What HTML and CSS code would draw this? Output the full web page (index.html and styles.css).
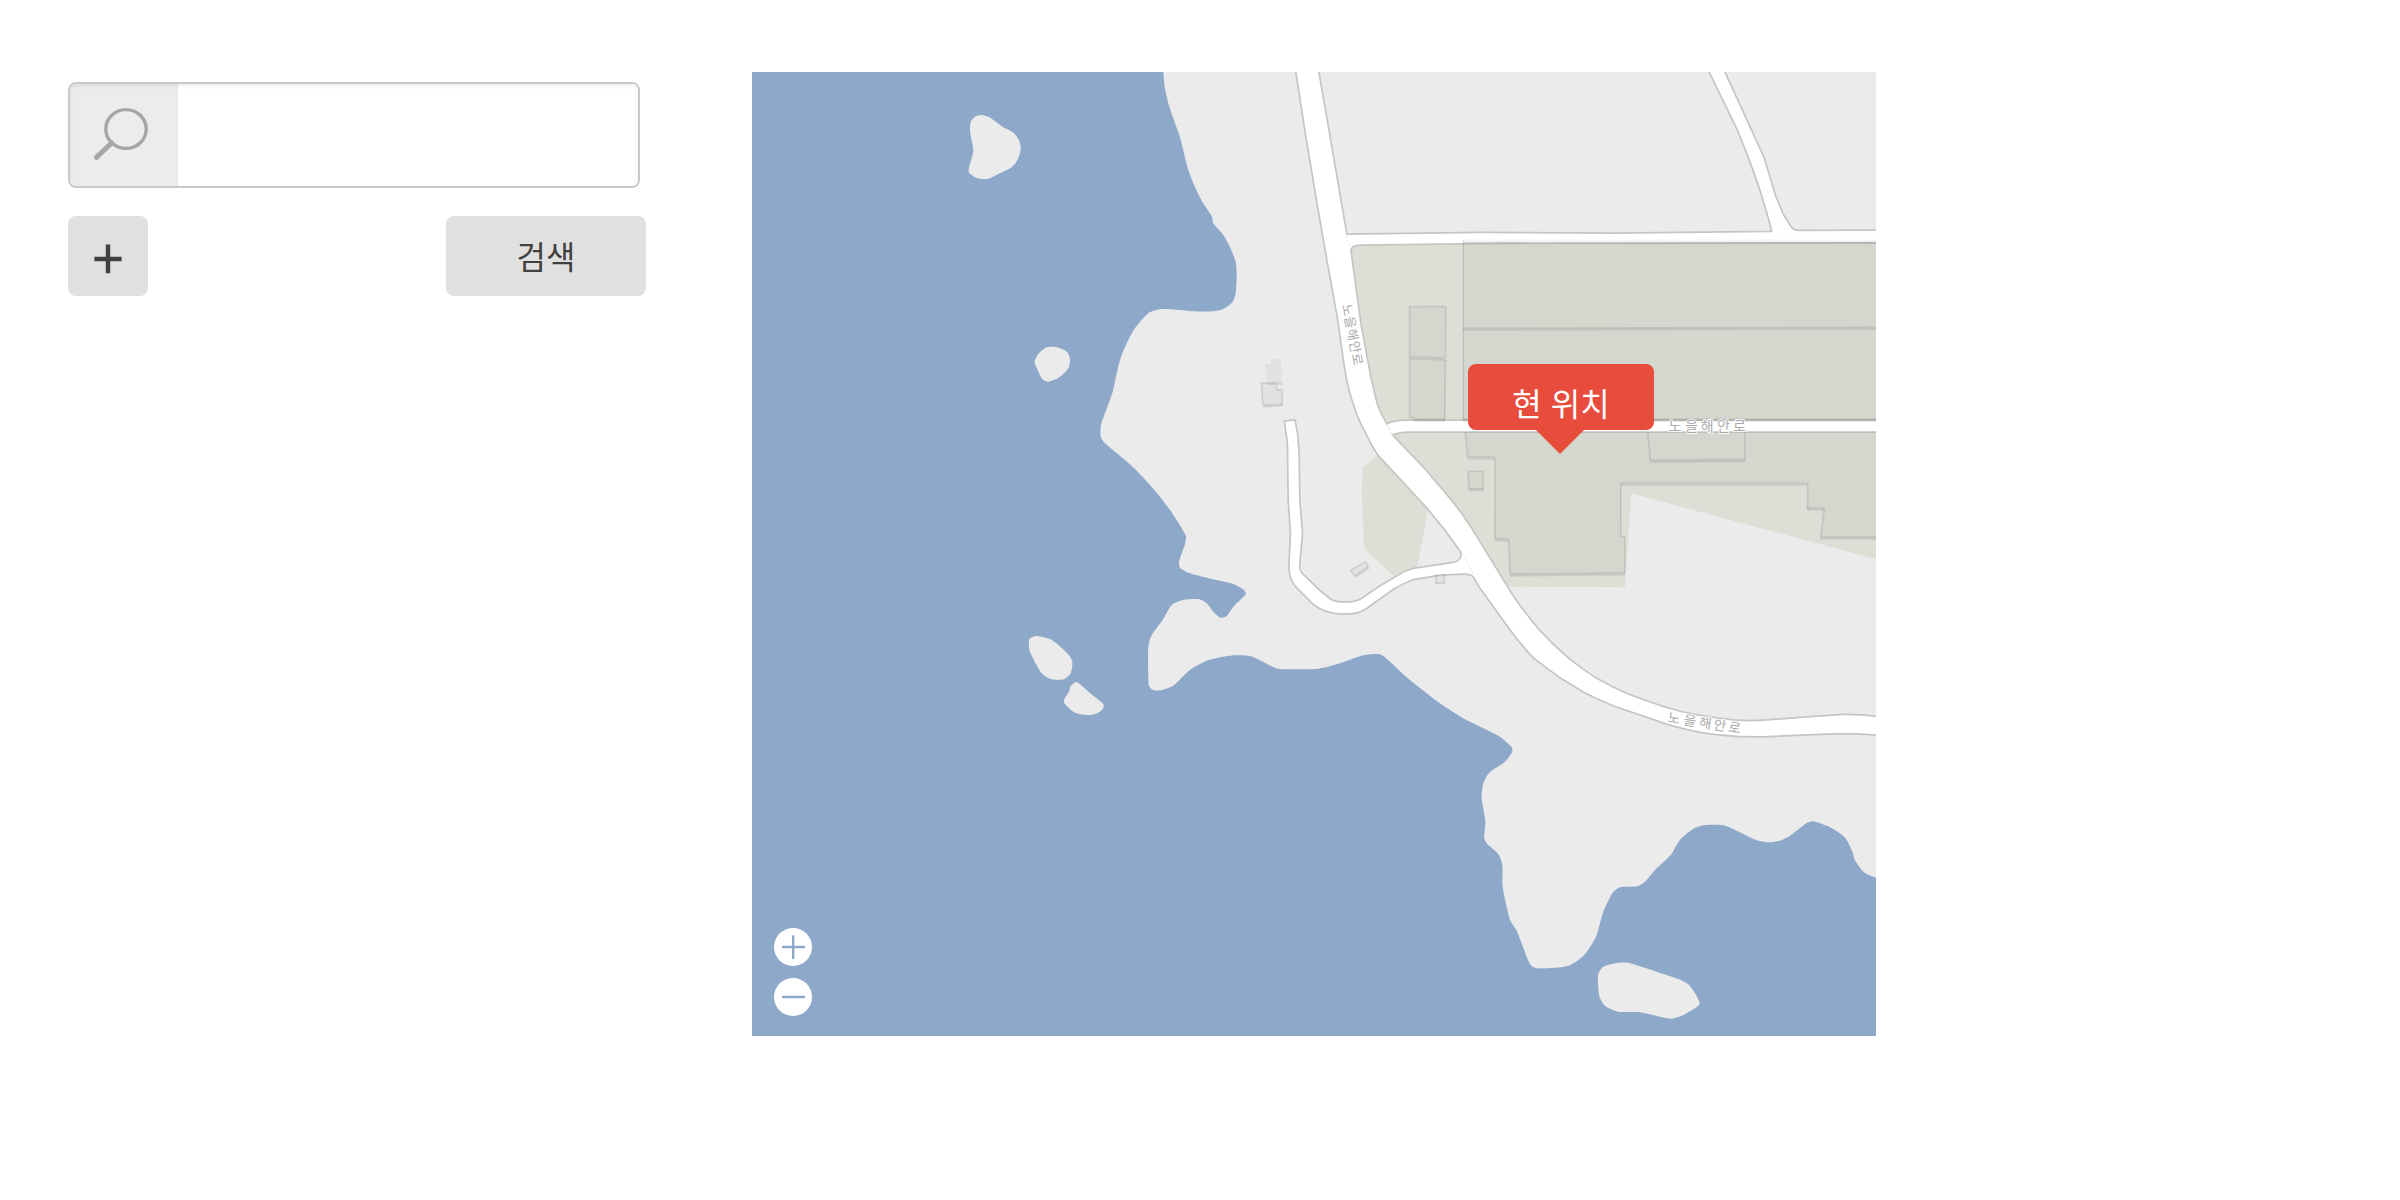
FILE: index.html
```html
<!DOCTYPE html>
<html lang="ko">
<head>
<meta charset="utf-8">
<title>위치 검색</title>
<link rel="stylesheet" href="styles.css">
</head>
<body>
<main class="page">
  <form class="search">
    <div class="search-box">
      <span class="search-icon">
        <svg width="44" height="48" viewBox="0 0 44 48"><ellipse cx="24" cy="21" rx="20.2" ry="19.4"/><path d="M-5.6 49.4 9.6 35" class="handle"/></svg>
      </span>
      <input class="search-input" type="text" aria-label="검색어">
    </div>
    <div class="actions">
      <button class="btn btn-add" type="button" aria-label="추가">
        <svg width="28" height="30" viewBox="0 0 28 30"><path d="M.4 15H27.6M14 .6V29.2"/></svg>
      </button>
      <button class="btn btn-search" type="button">검색</button>
    </div>
  </form>

  <section class="map">
    <svg class="map-canvas" width="1124" height="964" viewBox="752 72 1124 964">
      <defs>
        <path id="main-road" d="M1293 50 L1296.7 72 1306.7 136.7 1317.3 200 1328.3 263.3 1338.3 318.3 1345.7 370 Q1349 390 1355 406.7 Q1359 419 1364 428 Q1371 443 1378.3 454.3 L1427.3 507.3 Q1446 529 1461.7 551.7 L1473.3 575 1480 586.7 1511.7 630.7 Q1523 646 1534 657.3 Q1546 667 1560 676.7 L1585 692 Q1599 699 1613.3 705 L1670 724.3 Q1686 729 1703.3 732 Q1722 735 1740 735.7 L1763.3 736 1833.3 733 1856.7 733 1900 736 V719 L1876 717 Q1858 715 1843.3 715.3 L1806.7 717.7 1763.3 721 Q1748 722 1733.3 720.7 Q1716 719 1700 716.3 Q1681 713 1663.3 707.3 Q1644 701 1626.7 694.3 Q1610 687 1595 678.3 Q1581 669 1568.3 659 Q1552 645 1538.3 630 Q1524 613 1511.7 595 L1480 543.3 Q1471 528 1461.7 515 Q1453 503 1443.3 491.7 L1423.3 468.3 1398 442 Q1390 434 1386 424 Q1380 414 1376.7 405 Q1373 391 1370 376.7 L1360 323.3 1350 250 1346 234 1326.7 121.7 1318 72 1314 50 Z"/>
        <path id="north-road" d="M1330 235.3 1346 235 1480 233.3 1613 234 1772.7 232.3 Q1771 223 1767.3 211.7 Q1762 192 1755 173.3 Q1747 151 1738.3 130 L1710 72 1700 52 H1714 L1724 72 1763.3 157.7 1775 196.7 1783.3 216 1791 228 Q1793 231 1798 231.2 L1900 231 V242 L1480 242.7 1361.7 244.3 Q1351 244.5 1350.5 249 L1340 250 Z"/>
        <path id="middle-road" d="M1375 428 1386 425 Q1395 421 1405 421 H1900 V431.3 H1408 Q1399 431.3 1391.7 434 L1385 436 Z"/>
        <path id="lane" d="M1285.3 421.7 1288.3 443.3 1289 500 1291.3 533.3 1289.7 566.7 Q1290 579 1296.7 586.7 L1313.3 603.3 Q1323 612 1340 613 H1350 Q1359 613 1366.7 607.3 L1393.3 588.3 Q1402 583 1413.3 578.7 L1440 574.3 1463 573.3 Q1470 573 1474 576 L1480 570 1461.7 551.7 Q1463.5 561 1453.3 563.3 L1413.3 569.3 Q1406 571 1400 575 L1380 586.7 1361.7 599.3 Q1356 602.7 1348 602.7 H1340 Q1333 602 1330 599.7 L1320 591.7 1301.7 574 Q1298.5 570 1298.7 566.7 L1301.7 533.3 1299 500 1298.3 453.3 1296.7 433.3 1294.3 420.7 Z"/>
      </defs>

      <rect class="sea" x="752" y="72" width="1124" height="964"/>
      <g class="land">
        <polygon data-smooth points="1163.3,72 1165,88.3 1168.3,103.3 1173.3,118.3 1180,137.3 1188.3,170 1196.7,190.7 1203.3,203.3 1212,216.7 1213.3,223.3 1223.3,235 1230,247.3 1235.7,261.7 1236.7,273.3 1235.7,293.3 1232.7,301.7 1223.3,309 1213.3,311.3 1193.3,311.3 1176.7,309.7 1160,309.3 1148.3,313.3 1133.3,330.7 1121.7,355 1116.7,373.3 1112.7,391.7 1105,413.3 1101,425 1100.7,436.7 1105,443.3 1125,460 1136.7,470.7 1155,490.7 1170,510 1186,536 1185,544 1179,561.7 1180,567.7 1188.3,572.7 1206.7,577.7 1233.3,584 1244,590 1246,594 1234,606 1226.7,616 1220.7,617.7 1213.3,611.7 1206.7,603.3 1199.3,599.3 1183.3,600 1171.7,605 1162.7,620 1151.7,635 1148.3,646.7 1148.7,685 1152.7,690 1161.7,690 1173.3,685.7 1190,670 1206.7,660.7 1230,655.7 1250,656 1263.3,662 1277.3,668.7 1318.3,668.7 1340,663.3 1363.3,655.3 1380,654.3 1390,661.7 1406.7,677.3 1436.7,701 1463.3,718.3 1480,726.7 1500,736.7 1511.7,747.3 1512.3,751.7 1505,761.7 1489.3,772.7 1483.3,783.3 1481.7,798.3 1485.3,821 1484.3,838.3 1487.3,844 1498.3,854 1502.3,865 1502.7,886.7 1510,920 1516.7,930.7 1528.3,960.7 1531.7,966 1536.7,968.3 1550,968 1568.3,965.7 1583.3,956 1595.7,937.3 1603.3,911.7 1612.7,892.7 1620,887.3 1637.3,886.3 1645,881.7 1656.7,868.3 1670.7,855 1680,840 1693.3,828.7 1705,825 1723.3,825.3 1736.7,830.7 1756.7,840.3 1768.3,842.3 1780,840.7 1789.3,836.3 1806.7,823 1812.7,821.3 1830,827.3 1845,837.7 1852.7,852.3 1854.3,859 1864,872.3 1876,877.7 1960,900 1960,0 1160,0"/>
        <polygon data-smooth points="970.7,121.7 975,116.7 981.7,115 989.3,117.3 1003.3,127.3 1013.3,132.7 1019.3,140.7 1020.7,148.3 1018.3,158.3 1011.7,167.3 998.3,174 988.3,178.7 977.3,178.3 968.7,172.3 969.3,166.7 973.3,150.7 971.3,138.3 970,130.7"/>
        <polygon data-smooth points="1034.7,361.7 1038.3,354 1046.7,347.3 1056.7,347.3 1066.7,351.7 1070,359 1068.3,368.3 1059.3,377.3 1048.3,381.7 1042.3,379 1037.7,370"/>
        <polygon data-smooth points="1029.3,639.3 1036.7,636 1051.7,640 1068.3,654.3 1072.3,661.7 1070.7,673.3 1064,679.3 1051.7,679.3 1041.7,673.3 1030,651.7"/>
        <polygon data-smooth points="1076.7,682 1090,693 1103.3,704 1103.3,708.3 1098.3,712.7 1090,715 1075,712.7 1064.3,703.3 1064.3,699.3 1069.3,691 1070.7,686"/>
        <polygon data-smooth points="1598,975 1603.3,966.7 1618.3,962.7 1628.3,962.7 1678.3,979 1688.3,984.3 1695,993.3 1699.7,1003.3 1696.7,1007.3 1681.7,1015.7 1670,1018.7 1640,1012.3 1618.3,1011.7 1605,1005.7 1599.3,996"/>
      </g>

      <g class="green">
        <path d="M1342 241H1876V559.3L1631.3 493.3 1625 587.3 1508.3 586.7 1470 545 1385 440 1366 400 1350 320Z"/>
        <path d="M1380 453 1362.7 467.7 1361.7 490 1364 548.3 1393.3 575.7 1416.7 570 1428.3 508Z"/>
      </g>

      <g class="road-edge">
        <use href="#north-road"/><use href="#middle-road"/><use href="#lane"/><use href="#main-road"/>
      </g>
      <g class="road">
        <use href="#north-road"/><use href="#middle-road"/><use href="#lane"/><use href="#main-road"/>
      </g>
      <path class="junction" d="M1346.5 236 1350 247M1387 425 1391.5 433.5M1463 554 1474 575"/>

      <g class="building">
        <path d="M1409.3 306.7 1445.7 306.3 1445 358.7 1410 357.5Z"/>
        <path d="M1410 359 1445.7 360 1444.7 421 1413.7 420 1410 418Z"/>
        <path d="M1463 239.5H1880V420H1463Z"/>
        <path d="M1465 432 1467.7 457.5H1495L1494.7 539 1509 540 1510 575 1625 573.5V536.7L1620.7 536 1621 483H1807.7L1807.3 509H1824.3L1820.7 538H1880V432Z"/>
        <path d="M1467.7 471H1483.3V489.5H1469Z"/>
        <path d="M1271 359H1281L1282.7 384H1267.3L1265 364H1271Z"/>
        <path d="M1261 382.7H1276.7V390H1282.3L1282.7 405.5 1262.7 406.7Z"/>
        <path d="M1350 570 1365.7 561.7 1368.7 567.3 1355 578.3Z"/>
        <path d="M1435.7 574.3H1444.7V583.3H1435.7Z"/>
      </g>
      <g class="wall">
        <path d="M1409.6 418V306.7H1445.7V357M1410.3 418 1414 417.5M1445.4 360 1444.7 420"/>
        <path d="M1463.3 240V420M1463 242.6H1876"/>
        <path d="M1465.3 432 1467.7 457M1494.9 458V539M1508.7 540 1510 574M1624.8 573V536.7H1620.8V483M1807.5 483V509M1824.2 509 1820.7 537"/>
        <path d="M1647.8 432 1650.3 460.5M1744.8 432V460"/>
        <path d="M1469 489 1468 471.3H1483.3V489"/>
        <path d="M1262.7 405 1261.5 383H1276.6V390H1282.2V405M1267 384H1282"/>
        <path d="M1354 575 1350.5 570 1365.7 562 1368.5 567.3M1436 574.5V583H1444.4V574.5"/>
      </g>
      <g class="wall wall-thick">
        <path d="M1410 357.7 1445.7 359M1413.7 420H1445"/>
        <path d="M1463 329 1876 328.2M1463 420H1876"/>
        <path d="M1467.7 458H1495M1495 539.3 1509 540.5M1510 575 1625 573.7M1621 484.1H1807.5M1807.3 509H1824.3M1820.7 538H1876M1650.3 461 1745 460.2"/>
        <path d="M1469 489.5H1483.5M1262.7 406 1282.7 405M1355 576.5 1368.5 567.5"/>
      </g>

      <g class="label">
        <text transform="translate(1342 305) rotate(79)" font-size="13" letter-spacing=".6">노을해안로</text>
        <text x="1668.5 1685 1700.8 1717 1733" y="430.8" font-size="14">노을해안로</text>
        <text transform="translate(1667 722) rotate(9)" font-size="13.5" x="0 16.3 32 46.5 61.5" y="0">노을해안로</text>
      </g>
    </svg>

    <div class="pin">현 위치</div>
    <div class="zoom">
      <button class="zoom-btn" type="button" aria-label="확대"><svg width="38" height="38" viewBox="0 0 38 38"><path d="M9 19H30M19.2 8.5V30"/></svg></button>
      <button class="zoom-btn" type="button" aria-label="축소"><svg width="38" height="38" viewBox="0 0 38 38"><path d="M9 19H30"/></svg></button>
    </div>
  </section>
</main>
<script src="map.js"></script>
</body>
</html>
```
FILE: styles.css
```css
* { box-sizing: border-box; }

body {
  margin: 0;
  background: #fff;
  font-family: "Noto Sans CJK KR", "Noto Sans", sans-serif;
}

.page {
  display: flex;
  align-items: flex-start;
  gap: 106px;
  padding: 72px 0 0 68px;
}

.search { width: 578px; padding-top: 10px; }

.search-box {
  position: relative;
  display: flex;
  width: 572px;
  height: 106px;
  overflow: hidden;
  border: 2px solid #c9c9c9;
  border-radius: 8px;
}

.search-box::after {
  content: "";
  position: absolute;
  inset: 0;
  border-radius: 6px;
  box-shadow: inset 0 2px 4px rgba(0, 0, 0, .07);
  pointer-events: none;
}

.search-icon {
  display: flex;
  width: 108px;
  padding: 24px 0 0 32px;
  background: #ececec;
  border-right: 1px solid #e6e6e6;
}

.search-icon svg {
  overflow: visible;
  fill: none;
  stroke: #a6a6a6;
  stroke-width: 3.4;
}

.search-icon .handle { stroke-width: 5; stroke-linecap: round; }

.search-input { flex: 1; border: 0; outline: 0; font-size: 32px; }

.actions {
  display: flex;
  justify-content: space-between;
  margin-top: 28px;
}

.btn {
  display: flex;
  align-items: center;
  justify-content: center;
  height: 80px;
  padding: 0;
  border: 0;
  border-radius: 8px;
  background: #e0e0e0;
  color: #404040;
  font: 400 32px/1 "Noto Sans CJK KR", sans-serif;
}

.btn-add { width: 80px; padding: 6px 1px 0 0; }
.btn-add svg { fill: none; stroke: #404040; stroke-width: 4.4; }
.btn-search { width: 200px; padding-bottom: 3px; }

.map { position: relative; width: 1124px; height: 964px; }
.map-canvas { display: block; }

.sea { fill: #8ea8ca; }
.land { fill: #ebebeb; }
.green { fill: #dcdfd6; }
.road { fill: #fff; }
.road-edge { fill: none; stroke: #c5c6c3; stroke-width: 3.4; stroke-linejoin: round; }
.junction { fill: none; stroke: #e3e3e3; stroke-width: 1; stroke-dasharray: 2 2; }
.building { fill: rgba(0, 10, 0, .037); }
.wall { fill: none; stroke: rgba(0, 0, 0, .09); stroke-width: 1.8; }
.wall-thick { stroke-width: 3.4; }

.label {
  fill: #aaa;
  stroke: #fff;
  stroke-width: 1.6px;
  paint-order: stroke;
}

.pin {
  position: absolute;
  left: 716px;
  top: 292px;
  width: 186px;
  height: 66px;
  padding-top: 7px;
  border-radius: 8px;
  background: #e84c3d;
  color: #fff;
  font-size: 32px;
  line-height: 62px;
  text-align: center;
}

.pin::after {
  content: "";
  position: absolute;
  left: 68px;
  top: 100%;
  border: 24px solid transparent;
  border-top-color: #e84c3d;
  border-bottom-width: 0;
}

.zoom {
  position: absolute;
  left: 22px;
  bottom: 20px;
  display: flex;
  flex-direction: column;
  gap: 12px;
}

.zoom-btn {
  width: 38px;
  height: 38px;
  padding: 0;
  border: 0;
  border-radius: 50%;
  background: #fff;
}

.zoom-btn svg {
  display: block;
  fill: none;
  stroke: #8ea8ca;
  stroke-width: 2.4;
  stroke-linecap: round;
}
```
FILE: map.js
```js
// Turns each coastline polygon into a closed curve through its points.
document.querySelectorAll("polygon[data-smooth]").forEach(function (poly) {
  var p = poly.getAttribute("points").trim().split(/\s+/).map(function (s) {
    return s.split(",").map(Number);
  });
  var n = p.length;
  var k = 7;
  var d = "M" + p[0];
  for (var i = 0; i < n; i++) {
    var a = p[(i + n - 1) % n], b = p[i], c = p[(i + 1) % n], e = p[(i + 2) % n];
    var len = Math.hypot(c[0] - b[0], c[1] - b[1]);
    var t1 = Math.min(1, len / Math.hypot(b[0] - a[0], b[1] - a[1]));
    var t2 = Math.min(1, len / Math.hypot(e[0] - c[0], e[1] - c[1]));
    d += "C" + [
      b[0] + (c[0] - a[0]) / k * t1, b[1] + (c[1] - a[1]) / k * t1,
      c[0] - (e[0] - b[0]) / k * t2, c[1] - (e[1] - b[1]) / k * t2,
      c[0], c[1]
    ];
  }
  var path = document.createElementNS("http://www.w3.org/2000/svg", "path");
  path.setAttribute("d", d + "Z");
  poly.replaceWith(path);
});
```
